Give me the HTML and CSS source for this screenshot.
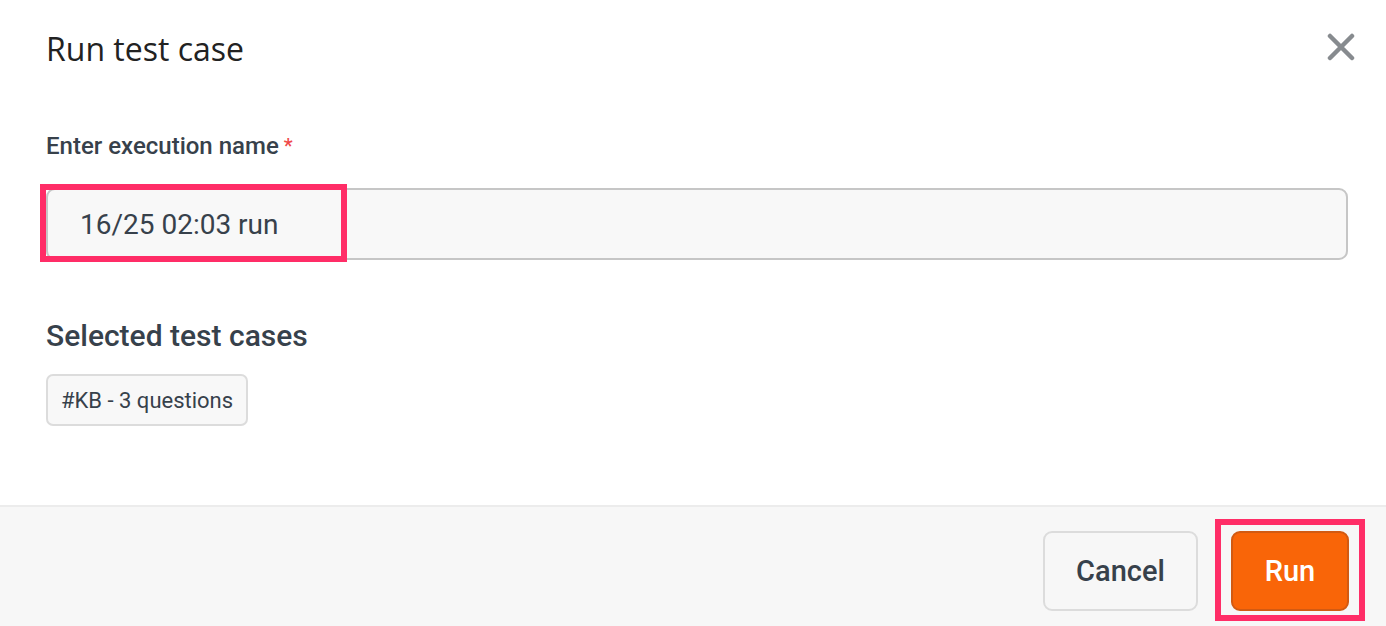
FILE: index.html
```html
<!DOCTYPE html>
<html lang="en">
<head>
    <meta charset="UTF-8">
    <meta name="viewport" content="width=device-width, initial-scale=1.0">
    <title>Run test case</title>
    <link rel="stylesheet" href="styles.css">
</head>
<body>
<div class="modal">
    <!-- Header -->
    <div class="modal-header">
        <h2 class="modal-title">Run test case</h2>
        <button class="close-btn" aria-label="Close">
            <svg width="28" height="28" viewBox="0 0 28 28">
                <path d="M3 3 L25 25 M25 3 L3 25" stroke="#878b8f" stroke-width="4.5" stroke-linecap="round"/>
            </svg>
        </button>
    </div>

    <!-- Body -->
    <div class="modal-body">
        <label class="field-label" for="exec-name">Enter execution name<span class="required">*</span></label>
        <div class="input-wrap">
            <input id="exec-name" class="text-input" type="text" value="16/25 02:03 run">
            <div class="highlight highlight-input"></div>
        </div>

        <h3 class="section-title">Selected test cases</h3>
        <div class="chips">
            <span class="chip">#KB - 3 questions</span>
        </div>
    </div>

    <!-- Footer -->
    <div class="modal-footer">
        <button class="btn btn-secondary">Cancel</button>
        <div class="run-wrap">
            <button class="btn btn-primary">Run</button>
            <div class="highlight highlight-run"></div>
        </div>
    </div>
</div>
</body>
</html>
```

FILE: styles.css
```css
:root {
    --color-text: #37414b;
    --color-title: #222;
    --color-border: #c6c6c6;
    --color-border-light: #dcdcdc;
    --color-input-bg: #f8f8f8;
    --color-footer-bg: #f7f7f7;
    --color-primary: #f96508;
    --color-primary-border: #d25a12;
    --color-required: #ef4a4a;
    --color-highlight: #ff2d67;
}

body {
    margin: 0;
    background: #fff;
    font-family: Roboto, "Liberation Sans", Arial, sans-serif;
    color: var(--color-text);
}

.modal {
    width: 1386px;
    height: 626px;
    display: flex;
    flex-direction: column;
    background: #fff;
    overflow: hidden;
}

/* Шапка */
.modal-header {
    display: flex;
    align-items: center;
    justify-content: space-between;
    padding: 26px 31px 0 46px;
    height: 46px;
}

.modal-title {
    margin: 0;
    font-family: "Open Sans", "Noto Sans", sans-serif;
    font-weight: 400;
    font-size: 32px;
    line-height: 46px;
    color: var(--color-title);
}

.close-btn {
    background: none;
    border: none;
    padding: 0;
    margin-top: -4px;
    cursor: pointer;
    display: flex;
}

/* Тело */
.modal-body {
    flex: 1;
    padding: 59px 38px 0 46px;
}

.field-label {
    display: block;
    font-size: 24px;
    font-weight: 500;
    line-height: 30px;
}

.required {
    color: var(--color-required);
    margin-left: 5px;
    font-size: 20px;
    vertical-align: top;
}

.input-wrap {
    position: relative;
    margin-top: 27px;
}

.text-input {
    display: block;
    width: 100%;
    box-sizing: border-box;
    height: 72px;
    padding: 0 32px;
    background: var(--color-input-bg);
    border: 2px solid var(--color-border);
    border-radius: 9px;
    font-family: inherit;
    font-size: 28px;
    color: var(--color-text);
    outline: none;
}

.highlight {
    position: absolute;
    border: 6px solid var(--color-highlight);
    pointer-events: none;
}

.highlight-input {
    left: -6px;
    top: -4px;
    width: 295px;
    height: 66px;
}

.section-title {
    margin: 58px 0 0;
    font-size: 30px;
    font-weight: 500;
    line-height: 36px;
}

.chips {
    display: flex;
    gap: 10px;
    margin-top: 20px;
}

.chip {
    display: inline-flex;
    align-items: center;
    height: 52px;
    box-sizing: border-box;
    padding: 0 13px;
    background: var(--color-input-bg);
    border: 2px solid var(--color-border-light);
    border-radius: 7px;
    font-size: 22px;
}

/* Подвал */
.modal-footer {
    display: flex;
    justify-content: flex-end;
    align-items: flex-start;
    gap: 33px;
    height: 121px;
    box-sizing: border-box;
    padding: 24px 37px 0 0;
    background: var(--color-footer-bg);
    border-top: 2px solid #ececec;
}

.btn {
    height: 80px;
    border-radius: 9px;
    font-family: inherit;
    font-size: 29px;
    font-weight: 500;
    cursor: pointer;
}

.btn-secondary {
    width: 155px;
    background: var(--color-footer-bg);
    border: 2px solid var(--color-border-light);
    color: var(--color-text);
}

.run-wrap {
    position: relative;
    display: flex;
}

.btn-primary {
    width: 118px;
    background: var(--color-primary);
    border: 2px solid var(--color-primary-border);
    color: #fff;
}

.highlight-run {
    left: -16px;
    top: -12px;
    width: 138px;
    height: 90px;
}
```
